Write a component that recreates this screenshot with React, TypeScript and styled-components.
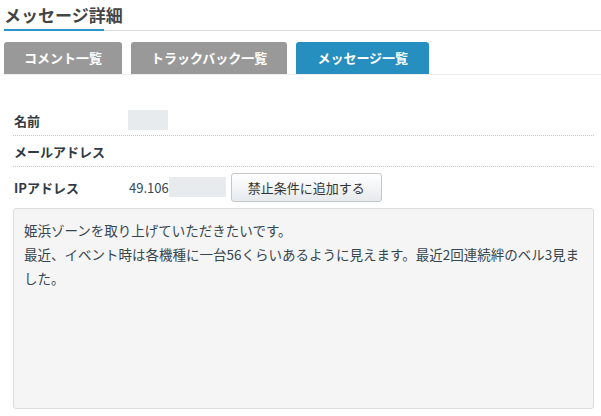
import styled, { createGlobalStyle } from "styled-components";

const GlobalStyle = createGlobalStyle`
  html, body {
    margin: 0;
    padding: 0;
    background: #fff;
  }
  body {
    font-family: "Noto Sans CJK JP", "Noto Sans", sans-serif;
    color: #333;
  }
`;

const Page = styled.div`
  width: 601px;
  overflow: hidden;
`;

const TitleBar = styled.div`
  margin-left: 4px;
  padding-top: 3px;
  height: 27px;
  border-bottom: 1px solid #dcdcdc;
  position: relative;

  &::after {
    content: "";
    position: absolute;
    left: 0;
    bottom: -1px;
    width: 100px;
    height: 2px;
    background: #2a93c9;
  }
`;

const Title = styled.h1`
  margin: 0;
  font-size: 17px;
  line-height: 24px;
  font-weight: bold;
  color: #444;
`;

const TabBar = styled.nav`
  display: flex;
  gap: 9px;
  margin: 11px 0 0 4px;
  border-bottom: 1px solid #eeeeee;
`;

const Tab = styled.a<{ $active?: boolean }>`
  display: block;
  height: 32px;
  line-height: 32px;
  padding: 0 ${(p) => (p.$active ? 21 : 20)}px;
  border-radius: 3px 3px 0 0;
  background: ${(p) => (p.$active ? "#268fbf" : "#999999")};
  color: #fff;
  font-size: 13px;
  font-weight: bold;
  text-decoration: none;
  white-space: nowrap;
`;

const Detail = styled.section`
  margin: 30px 7px 0 13px;
`;

const Row = styled.div<{ $last?: boolean }>`
  display: flex;
  align-items: center;
  min-height: 30px;
  padding: ${(p) => (p.$last ? "5px 0" : "0")};
  border-bottom: ${(p) => (p.$last ? "none" : "1px dotted #c8c8c8")};
`;

const Label = styled.div`
  width: 115px;
  padding-left: 1px;
  font-size: 13px;
  font-weight: bold;
  color: #2f3a42;
`;

const Value = styled.div`
  display: flex;
  align-items: center;
  font-size: 13px;
  color: #34495a;
`;

const Masked = styled.span<{ $w: number }>`
  display: inline-block;
  width: ${(p) => p.$w}px;
  height: 20px;
  background: #e8ebed;
`;

const BanButton = styled.button`
  margin-left: 5px;
  width: 151px;
  height: 29px;
  border: 1px solid #c4c7ca;
  border-radius: 3px;
  background: linear-gradient(#ffffff, #e6eaed);
  font-family: inherit;
  font-size: 13px;
  color: #333;
  padding: 0;
  cursor: pointer;
`;

const MessageBox = styled.div`
  margin-top: 1px;
  height: 181px;
  padding: 9px 10px;
  border: 1px solid #dddddd;
  border-radius: 3px;
  background: #f5f5f5;
  font-size: 13.5px;
  line-height: 24px;
  color: #36464f;
`;

export default function App() {
  return (
    <Page>
      <GlobalStyle />
      <TitleBar>
        <Title>メッセージ詳細</Title>
      </TitleBar>

      <TabBar>
        <Tab>コメント一覧</Tab>
        <Tab>トラックバック一覧</Tab>
        <Tab $active>メッセージ一覧</Tab>
      </TabBar>

      <Detail>
        <Row>
          <Label>名前</Label>
          <Value>
            <Masked $w={40} style={{ marginLeft: -1 }} />
          </Value>
        </Row>
        <Row>
          <Label>メールアドレス</Label>
          <Value />
        </Row>
        <Row $last>
          <Label>IPアドレス</Label>
          <Value>
            49.106
            <Masked $w={57} />
            <BanButton>禁止条件に追加する</BanButton>
          </Value>
        </Row>
        <MessageBox>
          姫浜ゾーンを取り上げていただきたいです。
          <br />
          最近、イベント時は各機種に一台56くらいあるように見えます。最近2回連続絆のベル3見ました。
        </MessageBox>
      </Detail>
    </Page>
  );
}
